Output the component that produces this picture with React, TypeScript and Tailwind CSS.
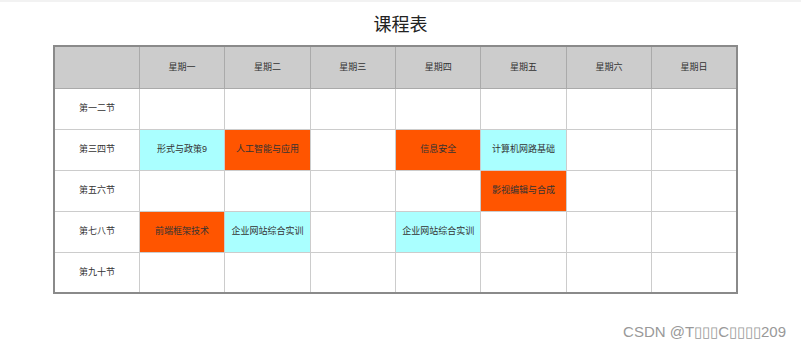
import React from "react";

type Cell = { name: string; color: "cyan" | "orange" } | null;

const days = ["星期一", "星期二", "星期三", "星期四", "星期五", "星期六", "星期日"];

const rows: { label: string; cells: Cell[] }[] = [
  { label: "第一二节", cells: [null, null, null, null, null, null, null] },
  {
    label: "第三四节",
    cells: [
      { name: "形式与政策9", color: "cyan" },
      { name: "人工智能与应用", color: "orange" },
      null,
      { name: "信息安全", color: "orange" },
      { name: "计算机网路基础", color: "cyan" },
      null,
      null,
    ],
  },
  {
    label: "第五六节",
    cells: [null, null, null, null, { name: "影视编辑与合成", color: "orange" }, null, null],
  },
  {
    label: "第七八节",
    cells: [
      { name: "前端框架技术", color: "orange" },
      { name: "企业网站综合实训", color: "cyan" },
      null,
      { name: "企业网站综合实训", color: "cyan" },
      null,
      null,
      null,
    ],
  },
  { label: "第九十节", cells: [null, null, null, null, null, null, null] },
];

const App: React.FC = () => {
  return (
    <div
      className="w-[801px] h-[349px] bg-white border-t-2 border-[#f2f2f2] text-[#333]"
      style={{ fontFamily: '"Liberation Sans", "Noto Sans CJK SC", sans-serif' }}
    >
      <h1 className="text-center text-[18px] leading-[24px] pt-[11px] text-[#222]">课程表</h1>
      <table className="ml-[53px] mt-[8px] w-[685px] table-fixed border-collapse border-2 border-[#8a8a8a] text-[9px]">
        <thead>
          <tr className="h-[42px] bg-[#cccccc]">
            <th className="border border-[#aaaaaa] font-normal"></th>
            {days.map((d) => (
              <th key={d} className="border border-[#aaaaaa] font-normal text-center">
                {d}
              </th>
            ))}
          </tr>
        </thead>
        <tbody>
          {rows.map((r) => (
            <tr key={r.label} className="h-[41px]">
              <td className="border border-[#cccccc] text-center">{r.label}</td>
              {r.cells.map((c, i) => (
                <td
                  key={i}
                  className={`border border-[#cccccc] text-center ${
                    c?.color === "cyan" ? "bg-[#aaffff]" : c?.color === "orange" ? "bg-[#ff5500]" : "bg-white"
                  }`}
                >
                  {c?.name}
                </td>
              ))}
            </tr>
          ))}
        </tbody>
      </table>
      <div className="flex justify-end pr-[15px] mt-[29px]">
        <span className="text-[15px] leading-[18px] text-[#999]">CSDN @T▯▯▯C▯▯▯▯209</span>
      </div>
    </div>
  );
};

export default App;
